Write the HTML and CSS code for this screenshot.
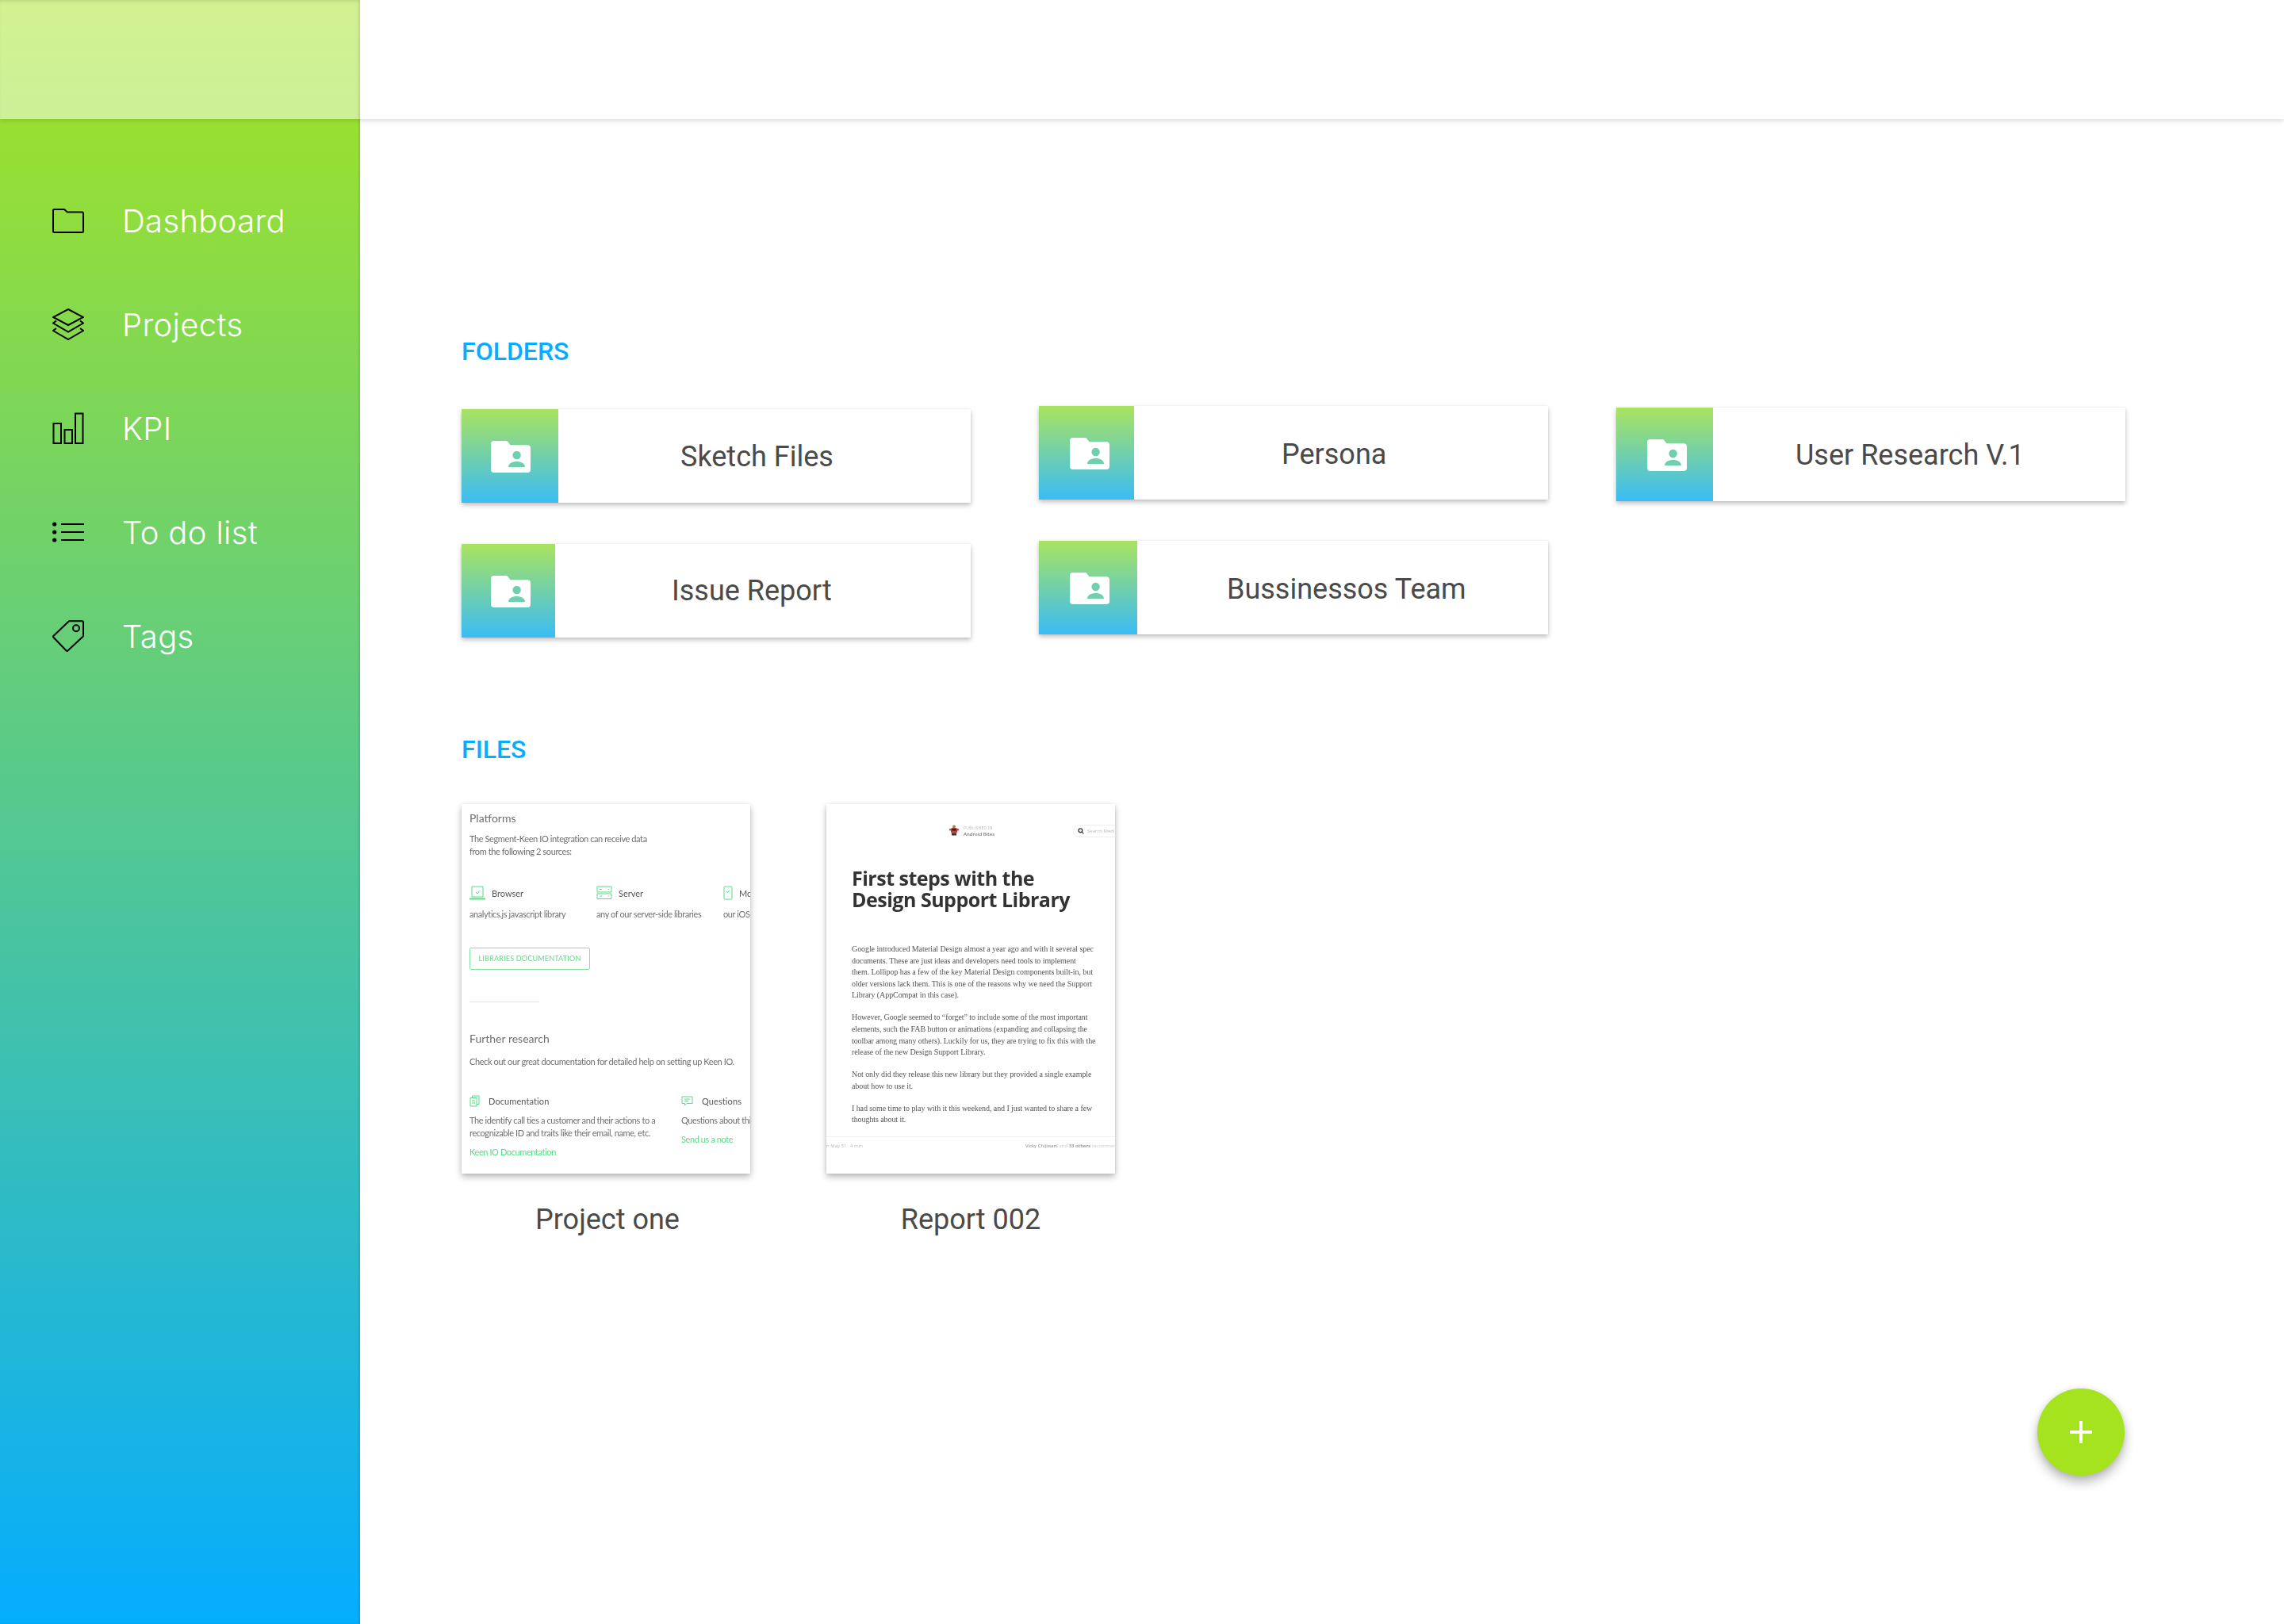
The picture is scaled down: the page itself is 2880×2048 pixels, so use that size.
FILE: index.html
```html
<!DOCTYPE html>
<html lang="en">
<head>
  <meta charset="UTF-8" />
  <meta name="viewport" content="width=device-width, initial-scale=1.0" />
  <title>Dashboard</title>
  <link rel="stylesheet" href="styles.css">
</head>
<body>
  <div class="app">
    <aside class="sidebar">
      <div class="brand"></div>
      <nav class="side-nav">
        <a class="side-link" href="#">
          <svg class="side-icon" viewBox="0 0 40 40"><path d="M2.5 6H15L19 9.5H37.5Q39 9.5 39 11V33.5Q39 35 37.5 35H2.5Q1 35 1 33.5V7.5Q1 6 2.5 6Z"/></svg>
          <span>Dashboard</span>
        </a>
        <a class="side-link" href="#">
          <svg class="side-icon" viewBox="0 0 40 40"><path d="M20 1L39 11L20 21L1 11Z"/><path d="M5 15.5L1 18.5L20 29.5L39 18.5L35 15.5"/><path d="M5 25L1 28L20 39L39 28L35 25"/></svg>
          <span>Projects</span>
        </a>
        <a class="side-link" href="#">
          <svg class="side-icon" viewBox="0 0 40 40"><rect x="1.5" y="14" width="9.5" height="25"/><rect x="15.5" y="22" width="9.5" height="17"/><rect x="29" y="1.5" width="9.5" height="37.5"/></svg>
          <span>KPI</span>
        </a>
        <a class="side-link" href="#">
          <svg class="side-icon" viewBox="0 0 40 40"><circle class="dot" cx="2.7" cy="10" r="2.6"/><circle class="dot" cx="2.7" cy="20" r="2.6"/><circle class="dot" cx="2.7" cy="30" r="2.6"/><path d="M11 10H40M11 20H40M11 30H40"/></svg>
          <span>To do list</span>
        </a>
        <a class="side-link" href="#">
          <svg class="side-icon" viewBox="0 0 40 40"><path d="M21 1.2H37.8Q39 1.2 39 2.4V19.5Q39 20.3 38.3 21L19.5 38.6Q18.5 39.4 17.6 38.5L1.4 21.8Q0.6 20.9 1.4 20Z"/><circle cx="30" cy="10.3" r="4"/></svg>
          <span>Tags</span>
        </a>
      </nav>
    </aside>

    <div class="main">
      <header class="topbar"></header>

      <section class="content">
        <h2 class="section-title">FOLDERS</h2>
        <div class="folder-grid">
          <div class="folder folder-sketch">
            <div class="folder-thumb"><svg class="folder-icon" viewBox="0 0 50 40"><use href="#folder-shared"/></svg></div>
            <div class="folder-name">Sketch Files</div>
          </div>
          <div class="folder folder-persona">
            <div class="folder-thumb"><svg class="folder-icon" viewBox="0 0 50 40"><use href="#folder-shared"/></svg></div>
            <div class="folder-name">Persona</div>
          </div>
          <div class="folder folder-research">
            <div class="folder-thumb"><svg class="folder-icon" viewBox="0 0 50 40"><use href="#folder-shared"/></svg></div>
            <div class="folder-name">User Research V.1</div>
          </div>
          <div class="folder folder-issue">
            <div class="folder-thumb"><svg class="folder-icon" viewBox="0 0 50 40"><use href="#folder-shared"/></svg></div>
            <div class="folder-name">Issue Report</div>
          </div>
          <div class="folder folder-team">
            <div class="folder-thumb"><svg class="folder-icon" viewBox="0 0 50 40"><use href="#folder-shared"/></svg></div>
            <div class="folder-name">Bussinessos Team</div>
          </div>
        </div>

        <h2 class="section-title files-title">FILES</h2>
        <div class="file-row">
          <figure class="file">
            <div class="file-page doc">
              <h4 class="doc-heading">Platforms</h4>
              <p class="doc-text doc-intro">The Segment-Keen IO integration can receive data<br>from the following 2 sources:</p>
              <div class="platforms">
                <div>
                  <div class="doc-label">
                    <svg class="mini-icon" viewBox="0 0 20 18"><path d="M3 1H17V14H3Z"/><path d="M0 16.5H20" class="thick"/><path d="M8 8L10 10L12.5 6.5"/></svg>
                    <span>Browser</span>
                  </div>
                  <p class="doc-text">analytics.js javascript library</p>
                </div>
                <div>
                  <div class="doc-label">
                    <svg class="mini-icon" viewBox="0 0 20 18"><path d="M1 1H19V8H1ZM1 10H19V16.5H1Z"/><path d="M4 4.5H7M15 4.5H16M4 13H7M15 13H16"/></svg>
                    <span>Server</span>
                  </div>
                  <p class="doc-text">any of our server-side libraries</p>
                </div>
                <div>
                  <div class="doc-label">
                    <svg class="mini-icon mini-phone" viewBox="0 0 12 18"><path d="M2 1H10Q11 1 11 2V16Q11 17 10 17H2Q1 17 1 16V2Q1 1 2 1Z"/><path d="M4 7L5.5 8.5L8 5.5M6 13V13.5"/></svg>
                    <span>Mobile</span>
                  </div>
                  <p class="doc-text">our iOS and Android libraries</p>
                </div>
              </div>
              <div class="doc-button">LIBRARIES DOCUMENTATION</div>
              <div class="doc-rule"></div>
              <h4 class="doc-heading">Further research</h4>
              <p class="doc-text doc-check">Check out our great documentation for detailed help on setting up Keen IO.</p>
              <div class="research">
                <div>
                  <div class="doc-label doc-label-strong">
                    <svg class="mini-icon mini-doc" viewBox="0 0 13 15"><path d="M1 3.5H9V14H1ZM3.5 3.5V1H12V11.5H9M3 7H7M3 10H7"/></svg>
                    <span>Documentation</span>
                  </div>
                  <p class="doc-text">The identify call ties a customer and their actions to a<br>recognizable ID and traits like their email, name, etc.</p>
                  <a class="doc-link">Keen IO Documentation</a>
                </div>
                <div>
                  <div class="doc-label doc-label-strong">
                    <svg class="mini-icon mini-chat" viewBox="0 0 15 13"><path d="M1 1H14V9.5H7L4.5 12V9.5H1ZM4 4H11M4 6.5H9"/></svg>
                    <span>Questions</span>
                  </div>
                  <p class="doc-text">Questions about this integration?</p>
                  <a class="doc-link">Send us a note</a>
                </div>
              </div>
            </div>
            <figcaption class="file-name file-name-first">Project one</figcaption>
          </figure>

          <figure class="file">
            <div class="file-page article">
              <div class="article-top">
                <div class="publisher">
                  <svg class="mascot" viewBox="0 0 12 14"><circle cx="6" cy="2.5" r="2" fill="#7a9a50"/><rect x="2" y="4" width="8" height="6.5" rx="1.5" fill="#c8402e"/><rect x="0" y="5" width="12" height="2.5" rx="1" fill="#c8402e"/><rect x="3.5" y="5" width="5" height="2.5" fill="#222"/><rect x="3" y="10.5" width="6" height="3" fill="#333"/></svg>
                  <div>
                    <div class="publisher-kicker">PUBLISHED IN</div>
                    <div class="publisher-name">Android Bites</div>
                  </div>
                </div>
                <div class="search-pill">
                  <svg class="search-icon" viewBox="0 0 10 10"><circle cx="4.2" cy="4.2" r="3"/><path d="M6.4 6.4L9.2 9.2"/></svg>
                  <span>Search Medium</span>
                </div>
              </div>
              <h3 class="article-title">First steps with the<br>Design Support Library</h3>
              <p class="article-text">Google introduced Material Design almost a year ago and with it several spec<br>documents. These are just ideas and developers need tools to implement<br>them. Lollipop has a few of the key Material Design components built-in, but<br>older versions lack them. This is one of the reasons why we need the Support<br>Library (AppCompat in this case).</p>
              <p class="article-text">However, Google seemed to “forget” to include some of the most important<br>elements, such the FAB button or animations (expanding and collapsing the<br>toolbar among many others). Luckily for us, they are trying to fix this with the<br>release of the new Design Support Library.</p>
              <p class="article-text">Not only did they release this new library but they provided a single example<br>about how to use it.</p>
              <p class="article-text">I had some time to play with it this weekend, and I just wanted to share a few<br>thoughts about it.</p>
              <div class="article-foot">
                <span class="foot-date">n May 31 · 4 min</span>
                <span class="foot-people">Vicky Chijiwani <i>and</i> <b>33 others</b> <i>recommend</i></span>
              </div>
            </div>
            <figcaption class="file-name">Report 002</figcaption>
          </figure>
        </div>
      </section>
    </div>
  </div>

  <button class="fab"><svg viewBox="0 0 28 28"><path d="M12 0h4v12h12v4H16v12h-4V16H0v-4h12z"/></svg></button>

  <svg class="defs" width="0" height="0">
    <symbol id="folder-shared" viewBox="0 0 50 40">
      <path fill="#fff" d="M4 0H19Q20.5 0 21.5 1.2L24.5 5.3H46Q50 5.3 50 9.3V36Q50 40 46 40H4Q0 40 0 36V4Q0 0 4 0Z"/>
      <ellipse fill="#6fd0b0" cx="32.6" cy="18" rx="5.2" ry="5.2"/>
      <path fill="#6fd0b0" d="M22 33C22 28.5 27 26 32.6 26C38 26 43 28.5 43 33Z"/>
    </symbol>
  </svg>
</body>
</html>
```

FILE: styles.css
```css
:root {
  --lime: #a5e420;
  --sky: #05adff;
  --text-dark: #4a4a4a;
  --doc-green: #58dc85;
  --doc-gray: #6f6f6f;
}

body {
  margin: 0;
  font-family: Roboto, "Liberation Sans", sans-serif;
  background: #fff;
  color: var(--text-dark);
  overflow: hidden;
}

.app {
  display: flex;
  height: 2048px;
}

.defs {
  position: absolute;
}

/* sidebar */
.sidebar {
  width: 454px;
  flex-shrink: 0;
  background: linear-gradient(180deg, var(--lime) 0%, var(--sky) 100%);
  box-shadow: inset -2px 0 2px rgba(0,0,0,0.1);
}

.brand {
  height: 150px;
  background: rgba(255,255,255,0.5);
  box-shadow: 0 3px 6px rgba(0,0,0,0.1), inset 0 4px 4px -2px rgba(0,0,0,0.1);
}

.side-nav {
  display: flex;
  flex-direction: column;
  gap: 91px;
  padding: 108px 0 0 66px;
}

.side-link {
  display: flex;
  align-items: center;
  gap: 48px;
  height: 40px;
  color: #fff;
  text-decoration: none;
  font-family: Inter, sans-serif;
  font-weight: 300;
  font-size: 40px;
  letter-spacing: 0.35px;
}

.side-icon {
  width: 40px;
  height: 40px;
  flex-shrink: 0;
  fill: none;
  stroke: #000;
  stroke-width: 2;
}

.side-icon .dot {
  fill: #000;
  stroke: none;
}

/* main */
.main {
  flex: 1;
}

.topbar {
  height: 150px;
  background: #fff;
  box-shadow: 0 3px 6px rgba(0,0,0,0.12);
}

.content {
  padding: 275px 0 0 128px;
}

.section-title {
  margin: 0;
  font-size: 32px;
  line-height: 36px;
  font-weight: 500;
  color: var(--sky);
}

.folder-grid {
  display: grid;
  grid-template-columns: 642px 642px 642px;
  column-gap: 86px;
  row-gap: 48px;
  align-items: start;
  margin-top: 51px;
}

.folder {
  display: flex;
  height: 118px;
  background: #fff;
  box-shadow: 0 3px 6px rgba(0,0,0,0.25), 0 0 3px rgba(0,0,0,0.05);
}

.folder-thumb {
  display: flex;
  align-items: center;
  box-sizing: border-box;
  padding: 2px 0 0 39px;
  background: linear-gradient(180deg, #a9e35f 0%, #3abcf5 100%);
}

.folder-icon {
  width: 50px;
  height: 40px;
}

.folder-name {
  flex: 1;
  display: flex;
  align-items: center;
  padding-top: 2px;
  font-size: 36px;
}

.folder-sketch { margin-top: 4px; }
.folder-sketch .folder-thumb { width: 122px; padding-left: 37px; }
.folder-sketch .folder-name { padding-left: 154px; }

.folder-persona .folder-thumb { width: 120px; }
.folder-persona .folder-name { padding: 4px 0 0 186px; }

.folder-research { margin-top: 2px; }
.folder-research .folder-thumb { width: 122px; }
.folder-research .folder-name { padding-left: 104px; }

.folder-issue { margin-top: 4px; }
.folder-issue .folder-thumb { width: 118px; padding-left: 37px; }
.folder-issue .folder-name { padding: 0 0 0 147px; }

.folder-team .folder-thumb { width: 124px; }
.folder-team .folder-name { padding: 4px 0 0 113px; }

.files-title {
  margin-top: 123px;
}

.file-row {
  display: flex;
  gap: 96px;
  margin-top: 51px;
}

.file {
  margin: 0;
  width: 364px;
}

.file-page {
  height: 466px;
  box-sizing: border-box;
  overflow: hidden;
  background: #fff;
  box-shadow: 0 4px 8px rgba(0,0,0,0.28), 0 0 4px rgba(0,0,0,0.08);
  white-space: nowrap;
  filter: blur(0.35px);
}

.file-name {
  margin-top: 36px;
  text-align: center;
  font-size: 36px;
  line-height: 44px;
}

.file-name-first {
  padding-left: 4px;
}

/* first thumbnail */
.doc {
  padding: 9px 0 0 10px;
  font-family: Lato, sans-serif;
  color: var(--doc-gray);
}

.doc-heading {
  margin: 0;
  font-size: 14px;
  line-height: 18px;
  font-weight: 400;
}

.doc-text {
  margin: 0;
  font-size: 11px;
  line-height: 16px;
  letter-spacing: -0.4px;
}

.doc-intro {
  margin-top: 9px;
}

.platforms {
  display: grid;
  grid-template-columns: 160px 160px 160px;
  margin-top: 35px;
}

.platforms .doc-text {
  margin-top: 10px;
}

.doc-label {
  display: flex;
  align-items: center;
  gap: 8px;
  height: 18px;
  font-size: 11px;
  color: #555;
}

.doc-label-strong {
  font-size: 11px;
  letter-spacing: 0.1px;
  gap: 11px;
}

.mini-icon {
  width: 20px;
  height: 18px;
  flex-shrink: 0;
  fill: none;
  stroke: var(--doc-green);
  stroke-width: 1;
}

.mini-icon .thick {
  stroke-width: 2;
}

.mini-phone { width: 12px; }
.mini-doc { width: 13px; height: 15px; }
.mini-chat { width: 15px; height: 13px; }

.doc-button {
  width: 150px;
  height: 26px;
  margin-top: 34px;
  border: 1px solid #86e3a6;
  border-radius: 2px;
  font-size: 9px;
  line-height: 26px;
  letter-spacing: 0.2px;
  text-align: center;
  color: var(--doc-green);
}

.doc-rule {
  width: 88px;
  height: 1px;
  margin: 40px 0 37px;
  background: #e4e4e4;
}

.doc-check {
  margin-top: 12px;
}

.research {
  display: grid;
  grid-template-columns: 267px 160px;
  margin-top: 32px;
}

.research .doc-text {
  margin-top: 8px;
}

.doc-link {
  display: block;
  margin-top: 8px;
  font-size: 11px;
  line-height: 16px;
  letter-spacing: -0.4px;
  color: var(--doc-green);
}

/* second thumbnail */
.article {
  padding: 26px 0 0 32px;
  color: #555;
}

.article-top {
  display: flex;
  height: 16px;
  font-family: "Open Sans", sans-serif;
}

.publisher {
  display: flex;
  flex-shrink: 0;
  gap: 6px;
  margin-left: 123px;
  width: 156px;
}

.mascot {
  width: 12px;
  height: 14px;
  flex-shrink: 0;
}

.publisher-kicker {
  font-size: 5px;
  line-height: 8px;
  color: #bbb;
  letter-spacing: 0.3px;
}

.publisher-name {
  font-size: 6px;
  line-height: 8px;
  font-weight: 600;
  color: #777;
}

.search-pill {
  display: flex;
  align-items: center;
  gap: 4px;
  width: 80px;
  height: 16px;
  box-sizing: border-box;
  flex-shrink: 0;
  padding-left: 5px;
  border: 1px solid #eee;
  border-radius: 8px;
  font-size: 6px;
  color: #bbb;
}

.search-icon {
  width: 8px;
  height: 8px;
  fill: none;
  stroke: #333;
  stroke-width: 1.6;
}

.article-title {
  margin: 38px 0 0;
  font-family: "Open Sans", sans-serif;
  font-size: 25px;
  line-height: 27px;
  font-weight: 700;
  letter-spacing: -0.5px;
  color: #333;
}

.article-text {
  margin: 0 0 13.4px;
  font-family: "Liberation Serif", serif;
  font-size: 10px;
  line-height: 14.6px;
  letter-spacing: -0.08px;
}

.article-title + .article-text {
  margin-top: 42px;
}

.article-foot {
  display: flex;
  justify-content: space-between;
  margin: 9px 0 0 -32px;
  padding-top: 6px;
  border-top: 1px solid #f2f2f2;
  font-family: "Open Sans", sans-serif;
  font-size: 6px;
  line-height: 10px;
  color: #888;
}

.foot-date {
  color: #bbb;
}

.foot-people {
  width: 113px;
  overflow: hidden;
}

.foot-people i {
  font-style: normal;
  color: #ccc;
}

.foot-people b {
  font-weight: 600;
}

/* floating button */
.fab {
  position: absolute;
  right: 201px;
  bottom: 187px;
  display: flex;
  align-items: center;
  justify-content: center;
  width: 110px;
  height: 110px;
  padding: 0;
  border: none;
  border-radius: 50%;
  background: #a5e31f;
  box-shadow: 0 8px 14px rgba(0,0,0,0.28), 0 0 6px rgba(0,0,0,0.08);
}

.fab svg {
  width: 28px;
  height: 28px;
  fill: #fff;
}
```
